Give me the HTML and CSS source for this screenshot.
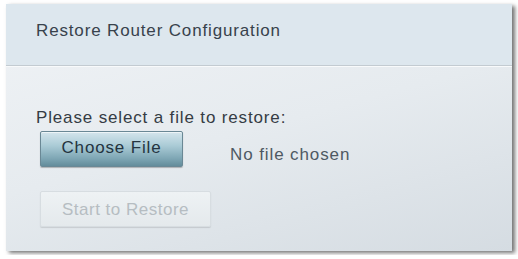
FILE: index.html
```html
<!DOCTYPE html>
<html>
<head>
<meta charset="utf-8">
<link rel="stylesheet" href="styles.css">
</head>
<body>
<div class="panel">
  <div class="panel-header">Restore Router Configuration</div>
  <div class="panel-body">
    <div class="label">Please select a file to restore:</div>
    <div class="file-row">
      <button class="btn-choose">Choose File</button>
      <span class="file-status">No file chosen</span>
    </div>
    <button class="btn-restore" disabled>Start to Restore</button>
  </div>
</div>
</body>
</html>
```
FILE: styles.css
```css
html, body {
  margin: 0;
  background: #ffffff;
}
body {
  padding: 4px 6px;
  font-family: "Liberation Sans", Arial, sans-serif;
  font-size: 17px;
  line-height: 19px;
  letter-spacing: 0.85px;
}
.panel {
  width: 506px;
  height: 247px;
  box-sizing: border-box;
  background: linear-gradient(165deg, #f0f3f6 0%, #e6ebef 50%, #d5dce2 100%);
  box-shadow: 3px 2px 4px rgba(0, 0, 0, 0.55);
}
.panel-header {
  height: 62px;
  box-sizing: border-box;
  padding: 17px 0 0 30px;
  background: #dde7ee;
  color: #38424c;
  border-bottom: 1px solid #c3cbd1;
}
.panel-body {
  border-top: 1px solid #f8fafb;
  padding: 41px 0 0 30px;
}
.label {
  color: #353c44;
}
.file-row {
  display: flex;
  align-items: flex-start;
  margin-top: 4px;
  margin-left: 4px;
}
button {
  font: inherit;
  letter-spacing: inherit;
  margin: 0;
  cursor: default;
}
.btn-choose {
  width: 143px;
  height: 36px;
  box-sizing: border-box;
  border: 1px solid #6a8895;
  border-radius: 2px;
  background: linear-gradient(#d4e5ec 0%, #aacbd6 40%, #7ea6b4 78%, #638c9b 100%);
  box-shadow: inset 0 1px 0 rgba(255,255,255,0.6), 0 1px 1px rgba(0,0,0,0.25);
  color: #243440;
  padding: 0 0 4px 0;
}
.file-status {
  margin-left: 47px;
  margin-top: 14px;
  color: #4e5963;
  letter-spacing: 0.9px;
}
.btn-restore {
  display: block;
  margin-top: 24px;
  margin-left: 4px;
  width: 171px;
  height: 36px;
  box-sizing: border-box;
  border: 1px solid #d7dde1;
  border-radius: 2px;
  background: linear-gradient(#eef2f4, #e4e9ec);
  box-shadow: 0 1px 1px rgba(0,0,0,0.12);
  color: #b6bdc2;
  letter-spacing: 0.5px;
  padding: 0;
}
```
